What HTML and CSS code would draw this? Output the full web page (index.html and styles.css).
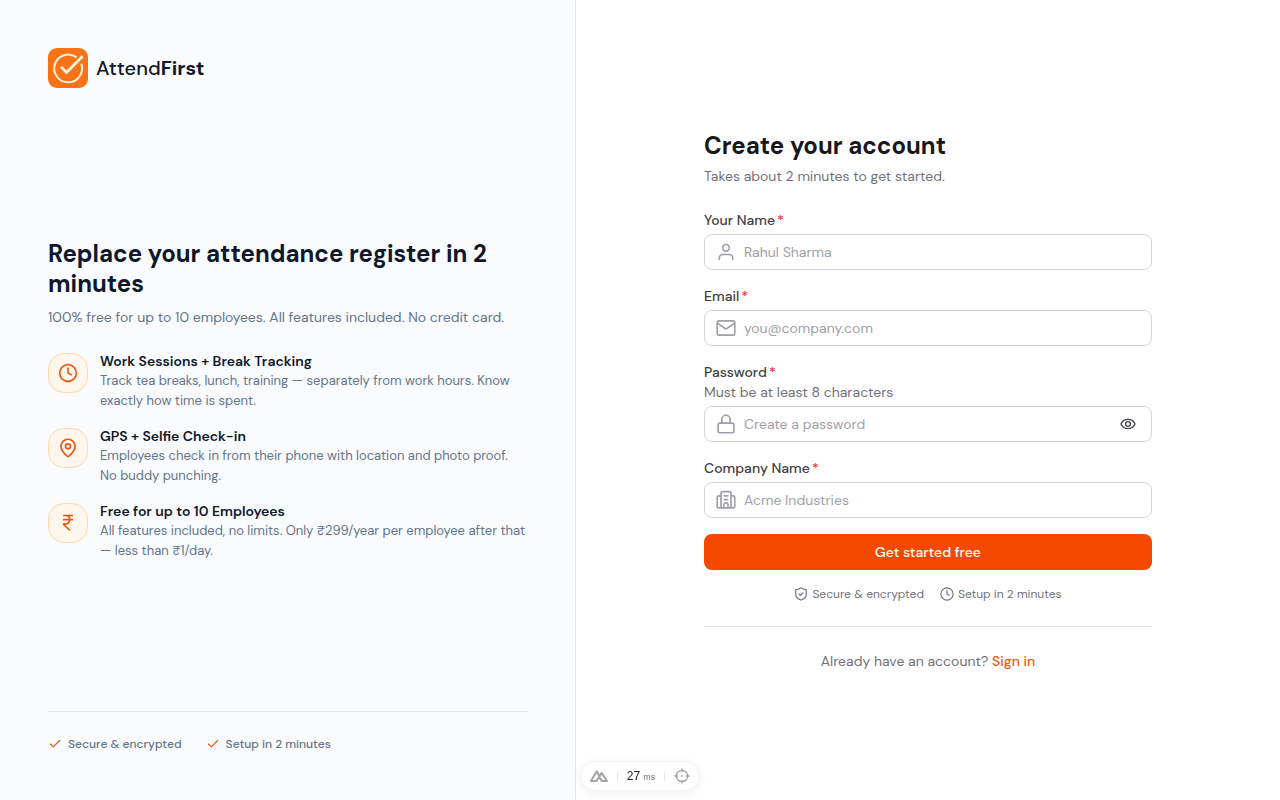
FILE: index.html
```html
<!DOCTYPE html>
<html lang="en">
<head>
<meta charset="utf-8">
<meta name="viewport" content="width=device-width, initial-scale=1">
<title>Create your account - AttendFirst</title>
<link rel="stylesheet" href="styles.css">
</head>
<body>
<div class="layout">
  <aside class="promo">
    <div class="brand">
      <svg class="brand-mark" viewBox="0 0 40 40" aria-hidden="true">
        <rect width="40" height="40" rx="9" fill="#f97316" stroke="none"/>
        <g stroke="#fff3e0" stroke-linecap="butt" stroke-linejoin="miter">
          <path d="M28.500 9.300A13.900 13.900 0 1 0 33.200 15.600" stroke-width="2"/>
          <path d="M12.800 18.600L18.500 24.500L34.600 8.200" stroke-width="2.800"/>
        </g>
      </svg>
      <span class="brand-name">Attend<strong>First</strong></span>
    </div>

    <section class="pitch">
      <h2 class="pitch-title">Replace your attendance register in 2 minutes</h2>
      <p class="pitch-lead">100% free for up to 10 employees. All features included. No credit card.</p>
      <ul class="features">
        <li class="feature">
          <span class="feature-icon">
            <svg class="icon-20" viewBox="0 0 24 24" aria-hidden="true"><circle cx="12" cy="12" r="10"/><path d="M12 6v6l4 2"/></svg>
          </span>
          <div>
            <h3 class="feature-title">Work Sessions + Break Tracking</h3>
            <p class="feature-text">Track tea breaks, lunch, training — separately from work hours. Know exactly how time is spent.</p>
          </div>
        </li>
        <li class="feature">
          <span class="feature-icon">
            <svg class="icon-20" viewBox="0 0 24 24" aria-hidden="true"><path d="M20.500 10c0 5-5.500 10.200-7.400 11.800a1.700 1.700 0 0 1-2.200 0C9 20.200 3.500 15 3.500 10a8.500 8.500 0 0 1 17 0"/><circle cx="12" cy="10" r="3"/></svg>
          </span>
          <div>
            <h3 class="feature-title">GPS + Selfie Check-in</h3>
            <p class="feature-text">Employees check in from their phone with location and photo proof. No buddy punching.</p>
          </div>
        </li>
        <li class="feature">
          <span class="feature-icon">
            <svg class="icon-20 rupee" viewBox="0 0 24 24" aria-hidden="true"><path d="M6 3h12M6 8h12M6 13l8.500 8M6 13h3M9 13c6.700 0 6.700-10 0-10"/></svg>
          </span>
          <div>
            <h3 class="feature-title">Free for up to 10 Employees</h3>
            <p class="feature-text">All features included, no limits. Only ₹299/year per employee after that — less than ₹1/day.</p>
          </div>
        </li>
      </ul>
    </section>

    <ul class="assurances">
      <li class="assurance"><svg class="icon-14 accent" viewBox="0 0 24 24" aria-hidden="true"><path d="M20 6L9 17l-5-5"/></svg>Secure &amp; encrypted</li>
      <li class="assurance"><svg class="icon-14 accent" viewBox="0 0 24 24" aria-hidden="true"><path d="M20 6L9 17l-5-5"/></svg>Setup in 2 minutes</li>
    </ul>
  </aside>

  <main class="signup">
    <div class="signup-inner">
      <h1 class="signup-title">Create your account</h1>
      <p class="signup-lead">Takes about 2 minutes to get started.</p>

      <form class="form">
        <div class="field">
          <label class="label" for="name">Your Name<span class="required">*</span></label>
          <div class="control">
            <svg class="icon-20" viewBox="0 0 24 24" aria-hidden="true"><circle cx="12" cy="7" r="4"/><path d="M20 21v-2a4 4 0 0 0-4-4H8a4 4 0 0 0-4 4v2"/></svg>
            <input class="input" id="name" type="text" placeholder="Rahul Sharma">
          </div>
        </div>
        <div class="field">
          <label class="label" for="email">Email<span class="required">*</span></label>
          <div class="control">
            <svg class="icon-20" viewBox="0 0 24 24" aria-hidden="true"><rect x="1.500" y="3.500" width="21" height="17" rx="2"/><path d="M2 6.500l8.900 6.100a2 2 0 0 0 2.200 0L22 6.500"/></svg>
            <input class="input" id="email" type="email" placeholder="you@company.com">
          </div>
        </div>
        <div class="field">
          <label class="label" for="password">Password<span class="required">*</span></label>
          <p class="hint" id="password-hint">Must be at least 8 characters</p>
          <div class="control">
            <svg class="icon-20" viewBox="0 0 24 24" aria-hidden="true"><rect x="2.500" y="11" width="19" height="11.500" rx="2"/><path d="M7 11V6.500a5 5 0 0 1 10 0V11"/></svg>
            <input class="input" id="password" type="password" placeholder="Create a password" aria-describedby="password-hint">
            <button class="reveal" type="button" aria-label="Show password">
              <svg class="icon-16" viewBox="0 0 24 24" aria-hidden="true"><path d="M1.500 12C3.500 7.500 7.500 5 12 5s8.500 2.500 10.500 7c-2 4.500-6 7-10.500 7s-8.500-2.500-10.500-7z"/><circle cx="12" cy="12" r="3.500"/></svg>
            </button>
          </div>
        </div>
        <div class="field">
          <label class="label" for="company">Company Name<span class="required">*</span></label>
          <div class="control">
            <svg class="icon-20" viewBox="0 0 24 24" aria-hidden="true"><path d="M6 21.500V4a2 2 0 0 1 2-2h8a2 2 0 0 1 2 2v17.500M6 7H3.500a2 2 0 0 0-2 2v10.500a2 2 0 0 0 2 2h17a2 2 0 0 0 2-2V9a2 2 0 0 0-2-2H18M10 7h4M10 11.500h4M9.500 21.500V18a2.500 2.500 0 0 1 5 0v3.500"/></svg>
            <input class="input" id="company" type="text" placeholder="Acme Industries">
          </div>
        </div>
        <button class="submit" type="submit">Get started free</button>
      </form>

      <ul class="trust">
        <li class="trust-item"><svg class="icon-14" viewBox="0 0 24 24" aria-hidden="true"><path d="M21 13c0 5-3.500 7.500-8.700 9.400a1 1 0 0 1-.600 0C6.500 20.500 3 18 3 13V5.500a1 1 0 0 1 1-1c2.300 0 5-1.200 7.300-2.800a1 1 0 0 1 1.400 0C15 3.300 17.700 4.500 20 4.500a1 1 0 0 1 1 1z"/><path d="M8.500 12l2.500 2.500 4.500-4.500"/></svg>Secure &amp; encrypted</li>
        <li class="trust-item"><svg class="icon-14" viewBox="0 0 24 24" aria-hidden="true"><circle cx="12" cy="12" r="10.500"/><path d="M12 6v6l4 2"/></svg>Setup in 2 minutes</li>
      </ul>

      <p class="signin">Already have an account? <a class="signin-link" href="#signin">Sign in</a></p>
    </div>
  </main>
</div>

<div class="devbar">
  <button class="devbar-button" type="button" aria-label="Toggle panel">
    <svg class="peaks" viewBox="0 0 18 12" aria-hidden="true"><path d="M9.300 6L6.700 1.300L1 11h5.500L11.700 3L17 11h-5.200l-1.500-2.600"/></svg>
  </button>
  <span class="devbar-rule"></span>
  <span class="timing">27<small class="unit">ms</small></span>
  <span class="devbar-rule"></span>
  <button class="devbar-button" type="button" aria-label="Inspect">
    <svg class="icon-16" viewBox="0 0 24 24" aria-hidden="true"><circle cx="12" cy="12" r="8.500"/><path d="M12 1.500v4M12 18.500v4M1.500 12h4M18.500 12h4M11.500 12h1"/></svg>
  </button>
</div>
</body>
</html>
```
FILE: styles.css
```css
* {
  box-sizing: border-box;
}

body,
h1,
h2,
h3,
p,
ul {
  margin: 0;
  padding: 0;
}

ul {
  list-style: none;
}

body {
  font-family: "DM Sans", Inter, "Open Sans", sans-serif;
  font-size: 14px;
  line-height: 20px;
  color: #18181b;
  background: #fff;
}

button,
input {
  font: inherit;
}

svg {
  display: block;
  flex: none;
  fill: none;
  stroke: currentColor;
  stroke-width: 2;
  stroke-linecap: round;
  stroke-linejoin: round;
}

.icon-20 {
  width: 20px;
  height: 20px;
}

.icon-16 {
  width: 16px;
  height: 16px;
}

.icon-14 {
  width: 14px;
  height: 14px;
}

.layout {
  display: grid;
  grid-template-columns: 45% 1fr;
  min-height: 100vh;
}

.promo {
  display: flex;
  flex-direction: column;
  justify-content: space-between;
  padding: 48px 47px 48px 48px;
  background: #f9fbfd;
  border-right: 1px solid #e2e8f0;
}

.brand {
  display: flex;
  align-items: center;
  gap: 8px;
}

.brand-mark {
  width: 40px;
  height: 40px;
}

.brand-name {
  font-size: 20px;
  line-height: 28px;
  font-weight: 500;
  color: #0f172a;
}

.brand-name strong {
  font-weight: 700;
}

.pitch-title {
  font-size: 24px;
  line-height: 30px;
  font-weight: 700;
  color: #0f172a;
}

.pitch-lead {
  margin-top: 8px;
  color: #64748b;
}

.features {
  display: grid;
  gap: 16px;
  margin-top: 24px;
  padding-right: 2px;
}

.feature {
  display: flex;
  gap: 12px;
}

.feature-icon {
  display: flex;
  align-items: center;
  justify-content: center;
  flex: none;
  width: 40px;
  height: 40px;
  margin-top: 2px;
  border: 1px solid #fed7aa;
  border-radius: 16px;
  background: #fff7ed;
  color: #ea580c;
}

.rupee {
  stroke-linecap: butt;
}

.feature-title {
  font-size: 14px;
  font-weight: 600;
  color: #0f172a;
}

.feature-text {
  font-size: 13px;
  line-height: 1.5;
  color: #64748b;
}

.assurances {
  display: flex;
  gap: 24px;
  padding-top: 24px;
  border-top: 1px solid #e2e8f0;
  font-size: 12px;
  line-height: 16px;
  font-weight: 500;
  color: #64748b;
}

.assurance {
  display: flex;
  align-items: center;
  gap: 6px;
}

.accent {
  color: #ea580c;
}

.signup {
  display: flex;
  align-items: center;
  justify-content: center;
  padding: 48px;
}

.signup-inner {
  width: 100%;
  max-width: 448px;
}

.signup-title {
  font-size: 24px;
  line-height: 32px;
  font-weight: 700;
}

.signup-lead {
  margin-top: 4px;
  color: #71717a;
}

.form {
  display: grid;
  gap: 16px;
  margin-top: 24px;
}

.label {
  display: block;
  font-weight: 500;
  color: #3f3f46;
}

.required {
  margin-left: 2px;
  color: #fb2c36;
}

.hint {
  color: #71717a;
}

.control {
  display: flex;
  align-items: center;
  gap: 8px;
  height: 36px;
  margin-top: 4px;
  padding: 0 11px;
  border: 1px solid #d4d4d8;
  border-radius: 8px;
  color: #9f9fa9;
}

.control:focus-within {
  border-color: #f54900;
}

.input {
  flex: 1;
  min-width: 0;
  padding: 0;
  border: 0;
  outline: 0;
  background: none;
  color: #18181b;
}

.input::placeholder {
  color: #9f9fa9;
  opacity: 1;
}

.reveal {
  padding: 4px;
  border: 0;
  background: none;
  color: #3f3f46;
}

.submit {
  height: 36px;
  border: 0;
  border-radius: 8px;
  background: #f54900;
  color: #fff;
  font-weight: 500;
}

.trust {
  display: flex;
  justify-content: center;
  gap: 16px;
  margin-top: 16px;
  font-size: 12px;
  line-height: 16px;
  color: #71717a;
}

.trust-item {
  display: flex;
  align-items: center;
  gap: 4px;
}

.signin {
  margin-top: 24px;
  padding-top: 24px;
  border-top: 1px solid #e4e4e7;
  text-align: center;
  color: #71717a;
}

.signin-link {
  font-weight: 500;
  color: #ea580c;
  text-decoration: none;
}

.devbar {
  position: fixed;
  bottom: 9px;
  left: 50%;
  display: flex;
  align-items: center;
  justify-content: space-between;
  width: 120px;
  height: 30px;
  padding: 0 9px;
  border: 1px solid #f1f1f1;
  border-radius: 15px;
  background: #fff;
  box-shadow: 0 2px 8px rgba(0, 0, 0, 0.06);
  color: #a3a3a3;
  transform: translateX(-50%);
}

.devbar-button {
  padding: 0;
  border: 0;
  background: none;
  color: inherit;
}

.peaks {
  width: 18px;
  height: 12px;
}

.devbar-rule {
  width: 1px;
  height: 9px;
  background: #e5e5e5;
}

.timing {
  display: flex;
  align-items: baseline;
  gap: 3px;
  font-family: "Liberation Sans", Arial, sans-serif;
  font-size: 12px;
  line-height: 16px;
  color: #262626;
}

.unit {
  font-size: 9px;
  color: #737373;
}
```
